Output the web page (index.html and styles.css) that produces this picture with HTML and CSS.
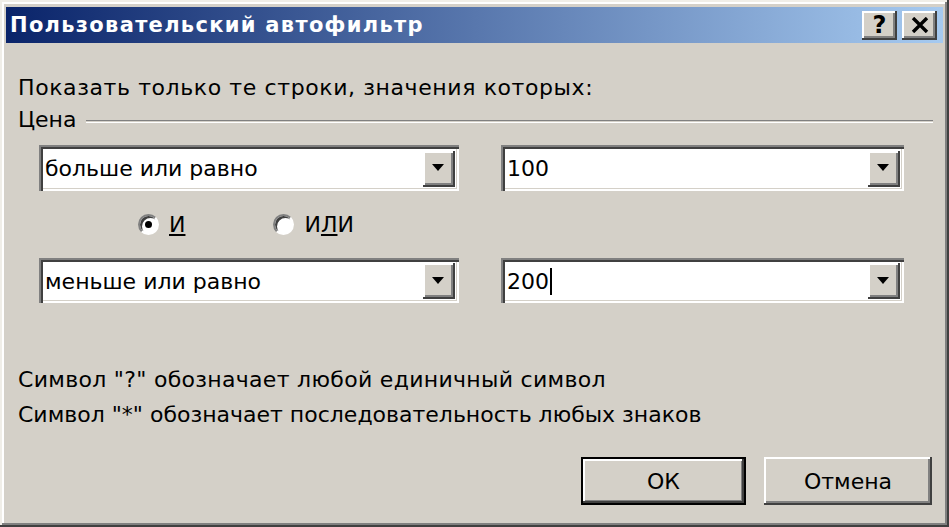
FILE: index.html
```html
<!DOCTYPE html>
<html lang="ru">
<head>
<meta charset="utf-8">
<title>Пользовательский автофильтр</title>
<link rel="stylesheet" href="styles.css">
</head>
<body>
<div class="window">
	<div class="titlebar">
		<span class="title">Пользовательский автофильтр</span>
		<div class="caption-buttons">
			<div class="cap-btn help">?</div>
			<div class="cap-btn close">
				<svg width="18" height="16" viewBox="0 0 18 16"><path d="M2 1 L16 15 M16 1 L2 15" stroke="#000" stroke-width="3.4"/></svg>
			</div>
		</div>
	</div>

	<div class="content">
		<p class="prompt">Показать только те строки, значения которых:</p>
		<div class="group">
			<span>Цена</span>
			<span class="etched"></span>
		</div>

		<div class="criteria">
			<div class="combo">
				<span class="value">больше или равно</span>
				<span class="drop"><i></i></span>
			</div>
			<div class="combo">
				<span class="value">100</span>
				<span class="drop"><i></i></span>
			</div>

			<div class="logic">
				<label class="radio checked"><span class="dot"></span><span><u>И</u></span></label>
				<label class="radio"><span class="dot"></span><span>И<u>Л</u>И</span></label>
			</div>

			<div class="combo">
				<span class="value">меньше или равно</span>
				<span class="drop"><i></i></span>
			</div>
			<div class="combo">
				<span class="value">200<span class="caret"></span></span>
				<span class="drop"><i></i></span>
			</div>
		</div>

		<p class="hint first">Символ "?" обозначает любой единичный символ</p>
		<p class="hint">Символ "*" обозначает последовательность любых знаков</p>

		<div class="actions">
			<div class="button default">ОК</div>
			<div class="button">Отмена</div>
		</div>
	</div>
</div>
</body>
</html>
```

FILE: styles.css
```css
html, body{margin: 0;padding: 0;}
body{
	width: 949px;
	height: 527px;
	overflow: hidden;
	background: #D4D0C8;
	font-family: "DejaVu Sans", "Liberation Sans", sans-serif;
	font-size: 22px;
	color: #000;
}
p{margin: 0;}

/* окно */
.window{
	box-sizing: border-box;
	width: 949px;
	height: 527px;
	padding: 7px 6px 5px 6px;
	background: #D4D0C8;
	box-shadow: inset -2px -2px #404040, inset 2px 2px #F0EEE8, inset -4px -4px #808080, inset 4px 4px #FFFFFF;
}

.titlebar{
	display: flex;
	align-items: center;
	justify-content: space-between;
	height: 36px;
	padding: 0 6px 0 4px;
	background: linear-gradient(to right, #0A246A, #A6CAF0);
}
.title{
	color: #fff;
	font-family: "DejaVu Sans", sans-serif;
	font-weight: bold;
	font-size: 21px;
	letter-spacing: 1.3px;
}
.caption-buttons{
	display: flex;
	gap: 5px;
}
.cap-btn{
	box-sizing: border-box;
	width: 35px;
	height: 29px;
	display: flex;
	align-items: center;
	justify-content: center;
	background: #D4D0C8;
	box-shadow: inset -2px -2px #404040, inset 2px 2px #fff, inset -4px -4px #808080;
	font-family: "DejaVu Sans", sans-serif;
	font-weight: bold;
	font-size: 24px;
}

.content{
	padding: 30px 0 0 12px;
}
.prompt{
	line-height: 30px;
	letter-spacing: 0.6px;
}
.group{
	display: flex;
	align-items: center;
	gap: 10px;
	margin-top: 2px;
	line-height: 30px;
	padding-right: 10px;
}
.etched{
	flex: 1;
	height: 1px;
	border-top: 1px solid #808080;
	border-bottom: 1px solid #fff;
	margin-top: 2px;
}

/* условия */
.criteria{
	display: grid;
	grid-template-columns: 420px 403px;
	column-gap: 42px;
	margin: 10px 0 0 21px;
}
.combo{
	box-sizing: border-box;
	height: 46px;
	display: flex;
	align-items: center;
	justify-content: space-between;
	background: #fff;
	padding: 4px 4px 3px 5px;
	box-shadow: inset 2px 2px #808080, inset 4px 4px #404040, inset -2px -2px #fff, inset -3px -3px #D4D0C8;
}
.combo .value{
	display: flex;
	align-items: center;
	padding-left: 1px;
}
.caret{
	display: inline-block;
	width: 2px;
	height: 27px;
	background: #000;
	margin-left: 1px;
}
.drop{
	box-sizing: border-box;
	width: 32px;
	height: 36px;
	display: flex;
	align-items: center;
	justify-content: center;
	background: #D4D0C8;
	box-shadow: inset -2px -2px #404040, inset 2px 2px #fff, inset -4px -4px #808080;
}
.drop i{
	width: 0;
	height: 0;
	border-left: 6px solid transparent;
	border-right: 6px solid transparent;
	border-top: 7px solid #000;
	margin: 0 2px 2px 0;
}

.logic{
	grid-column: 1 / 3;
	display: flex;
	align-items: center;
	height: 67px;
	padding-left: 99px;
	gap: 88px;
}
.radio{
	display: flex;
	align-items: center;
	gap: 10px;
}
.dot{
	box-sizing: border-box;
	position: relative;
	width: 21px;
	height: 21px;
	border-radius: 50%;
	background: #fff;
	border: 2px solid;
	border-color: #808080 #FFFFFF #FFFFFF #808080;
	box-shadow: inset 2px 2px #404040;
}
.radio.checked .dot::after{
	content: "";
	position: absolute;
	left: 5px;
	top: 5px;
	width: 7px;
	height: 7px;
	border-radius: 50%;
	background: #000;
}
.criteria .combo:nth-last-child(-n+2){height: 45px;}

.hint{
	line-height: 35px;
}
.hint.first{
	margin-top: 59px;
	letter-spacing: 0.3px;
}

.actions{
	display: flex;
	justify-content: flex-end;
	gap: 18px;
	margin: 25px 11px 0 0;
}
.button{
	box-sizing: border-box;
	width: 168px;
	height: 48px;
	display: flex;
	align-items: center;
	justify-content: center;
	background: #D4D0C8;
	box-shadow: inset -2px -2px #404040, inset 2px 2px #fff, inset -4px -4px #808080;
}
.button.default{
	width: 165px;
	box-shadow: inset 0 0 0 2px #000, inset -4px -4px #404040, inset 4px 4px #fff, inset -5px -5px #808080;
}
```
